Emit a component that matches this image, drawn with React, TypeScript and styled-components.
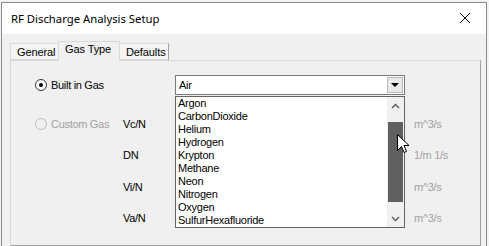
import React from 'react';
import styled, { createGlobalStyle } from 'styled-components';

const GlobalStyle = createGlobalStyle`
  html, body {
    margin: 0;
    padding: 0;
    background: #f3f3f3;
    overflow: hidden;
  }
  * {
    box-sizing: border-box;
  }
`;

const Window = styled.div`
  margin: 2px 0 0 1px;
  width: 486px;
  height: 244px;
  border: 1px solid #8a8a8a;
  border-bottom: 0;
  background: #f0f0f0;
  display: flex;
  flex-direction: column;
  font-family: 'Liberation Sans', Arial, sans-serif;
  font-size: 11px;
  color: #000;
`;

const TitleBar = styled.div`
  height: 31px;
  background: #ffffff;
  display: flex;
  align-items: center;
  justify-content: space-between;
  padding: 0 9px 1px 9px;
`;

const Title = styled.span`
  font-family: 'Noto Sans', sans-serif;
  font-size: 11.3px;
`;

const CloseButton = styled.span`
  display: flex;
  width: 12px;
  height: 12px;
  margin-right: 6px;
`;

const Body = styled.div`
  flex: 1;
  display: flex;
  flex-direction: column;
  padding: 7px 5px 0 8px;
`;

const TabStrip = styled.div`
  display: flex;
  align-items: flex-end;
  height: 19px;
  position: relative;
  z-index: 1;
`;

const Tab = styled.div<{ $active?: boolean; $width: number }>`
  width: ${(p) => p.$width}px;
  height: ${(p) => (p.$active ? 20 : 17)}px;
  margin-bottom: ${(p) => (p.$active ? -1 : 0)}px;
  margin-left: ${(p) => (p.$active ? -1 : 0)}px;
  margin-right: ${(p) => (p.$active ? -1 : 0)}px;
  border: 1px solid #d9d9d9;
  border-bottom: ${(p) => (p.$active ? '0' : '1px solid #d9d9d9')};
  border-right-color: ${(p) => (p.$active ? '#d9d9d9' : '#a0a0a0')};
  background: ${(p) => (p.$active ? '#f0f0f0' : '#f4f4f4')};
  position: relative;
  z-index: ${(p) => (p.$active ? 2 : 1)};
  padding: ${(p) => (p.$active ? '1px 0 0 6px' : '2px 0 0 6px')};
  letter-spacing: -0.1px;
`;

const Panel = styled.div`
  width: 471px;
  flex: 1;
  border: 1px solid #d9d9d9;
  border-right: 1px solid #a0a0a0;
  border-bottom: 1px solid #a0a0a0;
  padding: 14px 0 0 24px;
`;

const Form = styled.div`
  display: grid;
  grid-template-columns: 88px 52px 230px auto;
  grid-template-rows: 20px 39px 31px 32px 31px;
  align-items: end;
`;

const Cell = styled.div<{ $span?: number }>`
  height: 20px;
  display: flex;
  align-items: center;
  grid-column: span ${(p) => p.$span ?? 1};
  position: relative;
  letter-spacing: -0.3px;
`;

const Unit = styled(Cell)`
  color: #a0a0a0;
  padding-left: 9px;
`;

const RadioLabel = styled.label<{ $disabled?: boolean }>`
  display: flex;
  align-items: center;
  gap: 4px;
  color: ${(p) => (p.$disabled ? '#a0a0a0' : '#000')};
  letter-spacing: -0.3px;
`;

const RadioDot = styled.span<{ $checked?: boolean; $disabled?: boolean }>`
  width: 12px;
  height: 12px;
  border-radius: 50%;
  border: 1px solid ${(p) => (p.$disabled ? '#bcbcbc' : '#333')};
  background: ${(p) => (p.$disabled ? '#f0f0f0' : '#fff')};
  display: flex;
  align-items: center;
  justify-content: center;
  &::after {
    content: '';
    width: 4px;
    height: 4px;
    border-radius: 50%;
    background: #000;
    display: ${(p) => (p.$checked ? 'block' : 'none')};
  }
`;

const Combo = styled.div`
  width: 230px;
  height: 20px;
  border: 1px solid #7a7a7a;
  background: #fff;
  display: flex;
  align-items: center;
  justify-content: space-between;
  padding: 0 1px 0 3px;
  letter-spacing: -0.3px;
`;

const ComboButton = styled.span`
  width: 16px;
  height: 16px;
  border: 1px solid #b9b9b9;
  background: #e9e9e9;
  display: flex;
  align-items: center;
  justify-content: center;
  &::after {
    content: '';
    border-left: 4px solid transparent;
    border-right: 4px solid transparent;
    border-top: 4px solid #000;
  }
`;

const DropList = styled.div`
  position: absolute;
  top: 21px;
  left: 0;
  width: 230px;
  height: 132px;
  border: 1px solid #646464;
  background: #fff;
  display: flex;
  z-index: 5;
`;

const Items = styled.ul`
  list-style: none;
  margin: 0;
  padding: 0 0 0 2px;
  flex: 1;
  letter-spacing: -0.25px;
`;

const Item = styled.li`
  height: 13px;
  line-height: 13px;
`;

const ScrollBar = styled.div`
  width: 17px;
  background: #f0f0f0;
  display: flex;
  flex-direction: column;
`;

const ScrollArrow = styled.span`
  height: 17px;
  display: flex;
  align-items: center;
  justify-content: center;
`;

const ScrollTrack = styled.div`
  flex: 1;
  display: flex;
  flex-direction: column;
`;

const Thumb = styled.div`
  margin: 8px 1px 0;
  height: 80px;
  background: #606060;
`;

const Cursor = styled.svg`
  position: absolute;
  left: 221px;
  top: 37px;
  z-index: 6;
`;

const gases = [
  'Argon',
  'CarbonDioxide',
  'Helium',
  'Hydrogen',
  'Krypton',
  'Methane',
  'Neon',
  'Nitrogen',
  'Oxygen',
  'SulfurHexafluoride',
];

const rows = [
  { label: 'Vc/N', unit: 'm^3/s' },
  { label: 'DN', unit: '1/m 1/s' },
  { label: 'Vi/N', unit: 'm^3/s' },
  { label: 'Va/N', unit: 'm^3/s' },
];

export default function App() {
  return (
    <>
      <GlobalStyle />
      <Window>
        <TitleBar>
          <Title>RF Discharge Analysis Setup</Title>
          <CloseButton>
            <svg width="12" height="12" viewBox="0 0 12 12">
              <path d="M1 1 L11 11 M11 1 L1 11" stroke="#000" strokeWidth="1" />
            </svg>
          </CloseButton>
        </TitleBar>
        <Body>
          <TabStrip>
            <Tab $width={49}>General</Tab>
            <Tab $active $width={62}>Gas Type</Tab>
            <Tab $width={50}>Defaults</Tab>
          </TabStrip>
          <Panel>
            <Form>
              <Cell $span={2}>
                <RadioLabel>
                  <RadioDot $checked />
                  Built in Gas
                </RadioLabel>
              </Cell>
              <Cell>
                <Combo>
                  <span>Air</span>
                  <ComboButton />
                </Combo>
                <DropList>
                  <Items>
                    {gases.map((g) => (
                      <Item key={g}>{g}</Item>
                    ))}
                  </Items>
                  <ScrollBar>
                    <ScrollArrow>
                      <svg width="9" height="6" viewBox="0 0 9 6">
                        <path d="M1 5 L4.5 1.5 L8 5" stroke="#606060" strokeWidth="1.5" fill="none" />
                      </svg>
                    </ScrollArrow>
                    <ScrollTrack>
                      <Thumb />
                    </ScrollTrack>
                    <ScrollArrow>
                      <svg width="9" height="6" viewBox="0 0 9 6">
                        <path d="M1 1 L4.5 4.5 L8 1" stroke="#606060" strokeWidth="1.5" fill="none" />
                      </svg>
                    </ScrollArrow>
                  </ScrollBar>
                  <Cursor width="13" height="20" viewBox="0 0 13 20">
                    <path
                      d="M0.5 0.5 L0.5 16.5 L4.5 12.5 L7 18.5 L9.5 17.5 L7 11.5 L12 11.5 Z"
                      fill="#fff"
                      stroke="#000"
                      strokeWidth="1"
                    />
                  </Cursor>
                </DropList>
              </Cell>
              <Cell />
              {rows.map((r, i) => (
                <React.Fragment key={r.label}>
                  <Cell>
                    {i === 0 && (
                      <RadioLabel $disabled>
                        <RadioDot $disabled />
                        Custom Gas
                      </RadioLabel>
                    )}
                  </Cell>
                  <Cell>{r.label}</Cell>
                  <Cell />
                  <Unit>{r.unit}</Unit>
                </React.Fragment>
              ))}
            </Form>
          </Panel>
        </Body>
      </Window>
    </>
  );
}
